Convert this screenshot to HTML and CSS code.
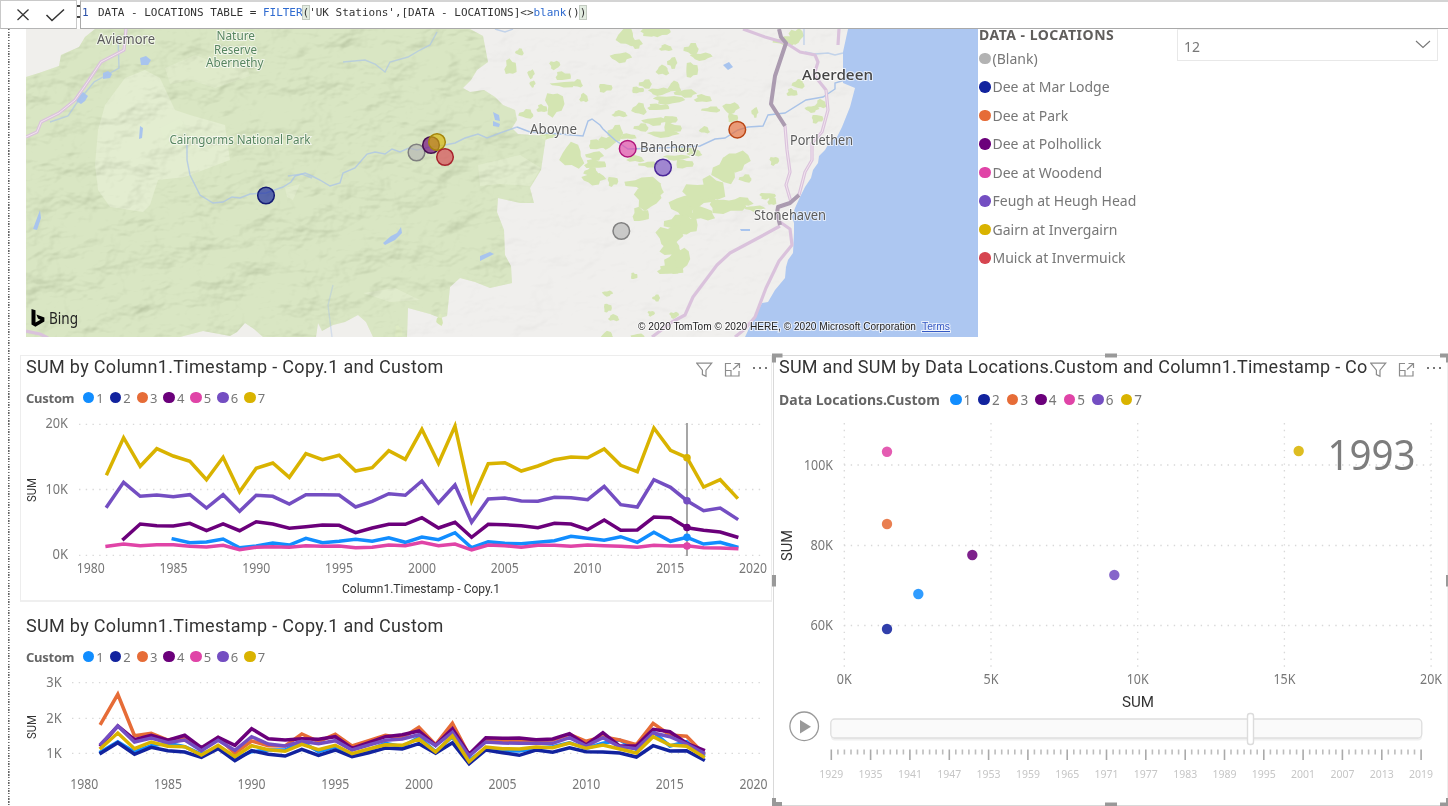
FILE: index.html
```html
<!DOCTYPE html>
<html lang="en">
<head>
<meta charset="utf-8">
<title>River stations report</title>
<link rel="stylesheet" href="styles.css">
</head>
<body>
<header class="formula">
  <div class="formula-actions">
    <svg width="75" height="27" viewBox="1 1 75 27"><path d="M17.500 9.500l11 10.500M28.500 9.500l-11 10.500" fill="none" stroke="#333" stroke-width="1.300"/><path d="M46.500 15l5.500 5.500L64 9.500" fill="none" stroke="#333" stroke-width="1.500"/></svg>
  </div>
  <div class="formula-gap"></div>
  <div class="formula-editor"><span class="line-no">1</span><code>DATA - LOCATIONS TABLE = <b>FILTER</b><i>(</i>'UK Stations',[DATA - LOCATIONS]&lt;&gt;<b>blank</b>()<i>)</i></code></div>
</header>
<main class="report">
  <section class="top">
    <svg class="map" id="map" width="952" height="308" viewBox="26 29 952 308">
      <defs>
        <filter id="relief" x="0" y="0" width="100%" height="100%">
          <feTurbulence type="fractalNoise" baseFrequency="0.022 0.035" numOctaves="4" seed="8" result="n"/>
          <feDiffuseLighting in="n" surfaceScale="9" diffuseConstant="1.150" lighting-color="#fff"><feDistantLight azimuth="225" elevation="60"/></feDiffuseLighting>
        </filter>
        <clipPath id="land"><path d="M26 29H848L843 52V83L855 88L850 107L842 127L825 150L813 170L800 197L792 217L794 233L793 253L786 267V278L768 302L753 320L745 337H26Z"/></clipPath>
        <clipPath id="parkclip"><use href="#park"/></clipPath>
      </defs>
      <rect x="26" y="29" width="952" height="308" fill="#f0efec"/>
      <g clip-path="url(#land)"><rect x="380" y="29" width="480" height="308" filter="url(#relief)" class="relief faint"/></g>
      <path id="park" fill="#cfdfb2" d="M95 29H470L483 36L488 62L477 70L471 80L463 88L470 92L484 90L495 97L503 105L515 110L517 120L512 128L518 134L546 136L544 150L541 170L530 188L534 203L520 203L498 198L497 212L504 230L505 255L511 266L512 283L490 288L475 282L460 278L450 287L447 316L440 318L430 314L408 308L407 337H373L366 322L358 315L345 322L333 325L322 331L318 323L316 337H263L254 329L245 323L237 332L230 336L203 331L180 337H26V77L39 73L59 66L61 55L79 47L85 37Z"/>
      <g fill="#dbe8c3">
        <path d="M125 78L145 70L160 78L175 110L190 115L225 125L230 160L185 177L158 180L150 205L143 212L110 207L98 190L95 165L98 130L105 105Z"/>
        <path d="M165 68L195 55L225 66L245 60L250 76L215 88L190 80L170 84Z" opacity=".6"/>
        <path d="M478 165L520 155L541 168L530 186L500 184L480 186Z" opacity=".7"/>
        <path d="M285 188L300 184L293 200L287 197ZM363 293L395 288L420 300L390 302Z" opacity=".7"/>
        <path d="M160 128L180 118L197 140L186 150L166 146Z" opacity=".8"/>
      </g>
      <g id="patches" fill="#d4e5b2"></g>
      <g clip-path="url(#parkclip)"><rect x="26" y="29" width="540" height="308" filter="url(#relief)" class="relief"/></g>
      <path fill="#adc7f1" d="M848 29L843 52V83L855 88L850 107L842 127L837 137L829 143L825 150L819 156L818 163L813 170L811 178L805 187L800 197L795 208L792 217L794 223L794 233L793 253L788 260L786 267L785 278L775 290L768 302L762 303L753 320L745 337H978V29Z"/>
      <g fill="#a8c4ee">
        <path d="M140 58l6-2 5 4-3 5-7 0zM103 73l5-2 4 3-2 4-7 1zM78 96l5-4 5 4-3 5-4 3-5-3zM140 126l3 2-1 10-3 1zM40 210l1 8-4 12-4-1zM383 243l8-7 6-3 4-6 1 6-7 7-10 5zM480 256l10-4 4 2-8 4-6 3zM493 112l6 3 1 6-5-1zM493 121l7 3-1 3-6-1zM723 65l6-3 4 5-5 3zM740 229h10v2h-9z" transform="translate(0 0)"/>
      </g>
      <g fill="none" stroke="#a9c3e8" stroke-width="1.400">
        <path opacity=".75" d="M187 145L187 160L190 175L200 195L213 203L223 202L232 197L240 198L250 194L266 193L283 187L291 182L295 176L305 173L312 176L320 180L330 186L340 183L343 173L355 168L367 154L375 152L385 154L392 149L400 152L409 148L417 150L430 147L445 145L455 143L465 138L478 134L487 138L500 133L517 127"/>
        <path d="M517 127L530 132L560 134L583 136L588 121L592 119L600 125L603 129L615 140L628 149L660 148L700 146L715 139L725 138L738 130L748 127L763 126L768 115L785 113L806 100L823 97L835 89L835 83L845 80"/>
        <path d="M805 52L815 54L828 53L835 55L843 53M804 29V45M288 176l14-2 10 4M343 62L365 60L375 64L385 72L390 62L408 57L420 50L430 45L437 32M495 29l10 3 8-3M118 35l1 33-25 14-18 22-8 12-18 6" opacity=".65"/>
        <path d="M333 285l-5 20 4 32" opacity=".4"/>
      </g>
      <g class="road">
        <path d="M126 29L124 50L101 62L89 80L75 100L59 113L41 122L37 132L26 137M26 331l14 3 8 4"/>
        <path d="M743 29L765 37L786 43L800 52L815 55L818 62L814 75L826 90L828 110L822 132L812 143L812 160L805 172L799 195"/>
        <path d="M839 29L838 45M785 126L787 150L790 172L786 185L791 202M780 222L790 229L792 245L779 261L766 288L755 317L745 329L735 337"/>
        <path d="M780 226L760 237L730 253L717 265L693 297L685 315L672 322L652 337"/>
      </g>
      <path class="road-core" d="M126 29L124 50L101 62L89 80L75 100L59 113L41 122L37 132L26 137M785 126L787 150L790 172L786 185L791 202M826 90L828 110L822 132L812 143L812 160L805 172L799 195"/>
      <path class="road-dark" d="M779 29L781 37L786 43L775 76L771 104L785 126M799 195L790 203L778 207L777 213L780 225"/>
      <g class="places">
        <text x="97" y="43.500" textLength="58" lengthAdjust="spacingAndGlyphs">Aviemore</text>
        <text x="530" y="133.500" textLength="47" lengthAdjust="spacingAndGlyphs">Aboyne</text>
        <text x="640" y="151.500" textLength="58" lengthAdjust="spacingAndGlyphs">Banchory</text>
        <text x="790" y="144.500" textLength="63" lengthAdjust="spacingAndGlyphs">Portlethen</text>
        <text x="754" y="219.500" textLength="72" lengthAdjust="spacingAndGlyphs">Stonehaven</text>
        <text x="802" y="79.500" textLength="71" lengthAdjust="spacingAndGlyphs" class="city">Aberdeen</text>
      </g>
      <g class="nature">
        <text x="216.500" y="40" textLength="38.500" lengthAdjust="spacingAndGlyphs">Nature</text>
        <text x="214" y="53.700" textLength="43" lengthAdjust="spacingAndGlyphs">Reserve</text>
        <text x="206" y="67.400" textLength="57.500" lengthAdjust="spacingAndGlyphs">Abernethy</text>
        <text x="169.500" y="144" textLength="141" lengthAdjust="spacingAndGlyphs">Cairngorms National Park</text>
      </g>
      <g fill-opacity=".65" stroke-width="1.500">
        <circle cx="266" cy="195.500" r="8.300" fill="#12239e" stroke="#151c74"/>
        <circle cx="416.500" cy="152.500" r="8.300" fill="#b3b3b3" stroke="#808080"/>
        <circle cx="431" cy="145" r="8.300" fill="#6b007b" stroke="#45104f"/>
        <circle cx="437" cy="142" r="8.300" fill="#d9b300" stroke="#a5860c"/>
        <circle cx="445" cy="157" r="8.300" fill="#d64550" stroke="#a8232d"/>
        <circle cx="627.700" cy="148.700" r="8.300" fill="#e044a7" stroke="#b0157a"/>
        <circle cx="663" cy="167.500" r="8.300" fill="#744ec2" stroke="#4a2698"/>
        <circle cx="737.300" cy="129.700" r="8.300" fill="#e66c37" stroke="#b94514"/>
        <circle cx="621.300" cy="231" r="8.300" fill="#b3b3b3" stroke="#808080"/>
      </g>
      <path fill="#000" d="M31.500 309l4 1.300v12.200l5-2.800-2.500-1.200-1.600-3.900 8 2.800v4.100l-9 5.300-3.900-2.200z"/>
      <text x="49" y="324" class="bing" textLength="29" lengthAdjust="spacingAndGlyphs">Bing</text>
      <text x="638" y="330" class="credit" textLength="278" lengthAdjust="spacingAndGlyphs">© 2020 TomTom © 2020 HERE, © 2020 Microsoft Corporation</text>
      <text x="922" y="330" class="credit terms" textLength="28" lengthAdjust="spacingAndGlyphs">Terms</text>
    </svg>
    <div class="stations">
      <h2>DATA - LOCATIONS</h2>
      <ul>
        <li class="c0">(Blank)</li><li class="c2">Dee at Mar Lodge</li><li class="c3">Dee at Park</li><li class="c4">Dee at Polhollick</li><li class="c5">Dee at Woodend</li><li class="c6">Feugh at Heugh Head</li><li class="c7">Gairn at Invergairn</li><li class="c8">Muick at Invermuick</li>
      </ul>
    </div>
    <div class="slicer"><span>12</span><svg width="16" height="9" viewBox="0 0 16 9"><path d="M1 1l7 6.500L15 1" fill="none" stroke="#777" stroke-width="1.100"/></svg></div>
  </section>
  <section class="bottom">
    <div class="lines">
      <article class="panel framed">
        <div class="panel-head"><h3>SUM by Column1.Timestamp - Copy.1 and Custom</h3><div class="tools"></div></div>
        <div class="legend"><strong>Custom</strong></div>
        <svg id="chart1" class="chart" width="750" height="190" viewBox="21 410 750 190"></svg>
      </article>
      <article class="panel">
        <div class="panel-head"><h3>SUM by Column1.Timestamp - Copy.1 and Custom</h3></div>
        <div class="legend"><strong>Custom</strong></div>
        <svg id="chart2" class="chart" width="750" height="137" viewBox="21 669 750 137"></svg>
      </article>
    </div>
    <article class="panel selected">
      <div class="panel-head"><h3>SUM and SUM by Data Locations.Custom and Column1.Timestamp - Co</h3><div class="tools"></div></div>
      <div class="legend wide"><strong>Data Locations.Custom</strong></div>
      <svg id="scatter" class="chart" width="673" height="390" viewBox="774 414 673 390"></svg>
      <svg class="handles" width="676" height="454" viewBox="772 352 676 454"><path fill="#999" d="M772 353.500h10.500v4H776v5h-4zM1105 353.500h12v4h-12zM1440 353.500h8v9h-2v-5h-6zM772 575h4v11.500h-4zM1446 575h2v11.500h-2zM772 798h4v4h6v4h-10zM1105 802.500h12v3.500h-12zM1446 798h2v8h-8v-3.500h6z"/></svg>
    </article>
  </section>
</main>
<script src="charts.js"></script>
</body>
</html>
```
FILE: styles.css
```css
* { box-sizing: border-box; margin: 0; padding: 0; }
body { width: 1448px; height: 806px; overflow: hidden; background: #fff; font-family: "Noto Sans", "Open Sans", sans-serif; color: #666; }
svg { display: block; }
.formula { display: flex; height: 29px; background: #fff; }
.formula-actions { width: 77px; height: 29px; border: 1px solid #c9c9c9; border-bottom-color: #b5b5b5; }
.formula-gap { width: 3px; height: 18px; border-top: 5px solid #fff; background: linear-gradient(#444 2px, transparent 2px 11px, #444 11px); }
.formula-editor { flex: 1; display: flex; border: 1px solid #a9a9a9; border-top: 2px solid #d4d4d4; border-right: 0; padding: 0 0 0 1px; font: 11px/21px "DejaVu Sans Mono", monospace; color: #333; }
.line-no { width: 16px; color: #2b50a8; }
.formula-editor code { font: inherit; letter-spacing: -0.025px; white-space: pre; }
.formula-editor b { font-weight: 400; color: #2f6bd0; }
.formula-editor i { font-style: normal; background: #e2ece0; box-shadow: 0 0 0 1px #c3cbc1; }
.report { height: 777px; padding-left: 20px; background: repeating-linear-gradient(#666 0 1.300px, #fff 1.300px 2.700px) 7.700px 0 / 1.600px 100% no-repeat; }
.top { display: flex; height: 326px; padding-left: 6px; }
.map { flex: none; }
.relief { mix-blend-mode: multiply; opacity: .22; }
.relief.faint { opacity: .06; }
.road { fill: none; stroke: #dac2dc; stroke-width: 3.200; stroke-linejoin: round; }
.road-core { fill: none; stroke: #f2e4ee; stroke-width: 1; }
.road-dark { fill: none; stroke: #ab9bb0; stroke-width: 4; stroke-linejoin: round; }
.places, .nature { font-size: 14px; paint-order: stroke; stroke: rgba(255,255,255,.65); stroke-width: 2px; }
.places { fill: #5b5b5b; }
.places .city { font-size: 15px; fill: #444; font-weight: 500; }
.nature { font-size: 12.500px; fill: #578560; }
.bing { font-size: 15.500px; fill: #222; }
.credit { font: 10.300px "Liberation Sans", Arial, sans-serif; fill: #222; paint-order: stroke; stroke: rgba(255,255,255,.7); stroke-width: 2px; }
.terms { fill: #3559c4; text-decoration: underline; }
.stations { width: 199px; padding-left: 1px; }
.stations h2 { height: 15px; font-size: 14px; line-height: 12px; color: #605e5c; letter-spacing: 0.5px; white-space: nowrap; }
.stations ul { list-style: none; }
.stations li { display: flex; align-items: center; height: 28.500px; font-size: 14px; color: #777; }
.stations li::before, .key::before { content: ""; width: 11.500px; height: 11.500px; border-radius: 50%; background: var(--c); margin-right: 2px; flex: none; }
.c0 { --c: #b3b3b3; } .c1 { --c: #118dff; } .c2 { --c: #12239e; } .c3 { --c: #e66c37; } .c4 { --c: #6b007b; }
.c5 { --c: #e044a7; } .c6 { --c: #744ec2; } .c7 { --c: #d9b300; } .c8 { --c: #d64550; }
.slicer { width: 261px; height: 32px; border: 1px solid #e8e8e8; border-top-color: #f2f2f2; display: flex; justify-content: space-between; align-items: center; padding: 3px 6px 0; font-size: 14px; color: #777; }
.slicer svg { margin-top: -4px; }
.bottom { display: flex; height: 451px; }
.lines { width: 753px; flex: none; }
.panel { position: relative; border: 1px solid transparent; }
.lines .panel { width: 752px; height: 247px; }
.framed { border-color: #ededed; border-bottom: 2px solid #efefef; }
.lines .panel + .panel { margin-top: 12px; height: 192px; }
.panel-head { display: flex; justify-content: space-between; height: 28px; padding-left: 5px; }
.panel-head h3 { font: 400 18px/21px Roboto, sans-serif; color: #333; letter-spacing: 0.320px; white-space: nowrap; }
.tools { flex: none; width: 80px; padding: 6px 3px 0 5px; }
.legend { display: flex; align-items: center; height: 26px; padding-left: 5px; padding-top: 1px; font-size: 13px; color: #777; }
.legend strong { color: #666; font-size: 13px; width: 56.800px; letter-spacing: -0.250px; }
.key { display: flex; align-items: center; width: 26.900px; }
.selected { flex: 1; min-width: 0; border: 1px solid #d9d9d9; border-right-color: #eee; height: 451px; }
.selected h3 { width: 588px; letter-spacing: 0.240px; }
.selected .tools { padding-left: 3px; }
.selected .legend { height: 30px; font-size: 13.500px; }
.legend.wide strong { width: 171px; font-size: 14px; letter-spacing: 0; }
.wide .key { width: 28.450px; }
.handles { position: absolute; left: -2px; top: -4px; }
.chart text { font-size: 13.500px; fill: #777; }
.chart .axis { font-family: Roboto, sans-serif; font-size: 12px; fill: #333; }
.grid { stroke: #d8d8d8; stroke-width: 1.300; stroke-dasharray: 1.400 5.330; }
.chart polyline { fill: none; stroke-width: 3.500; stroke-linejoin: miter; stroke-linecap: square; }
.chart .year { font-size: 42px; fill: #7d7d7d; }
.chart .tick { font-size: 11px; fill: #c6c6c6; }
```
FILE: charts.js
```js
const COLORS = { 1: '#118dff', 2: '#12239e', 3: '#e66c37', 4: '#6b007b', 5: '#e044a7', 6: '#744ec2', 7: '#d9b300' };

const label = (x, y, s, w, extra = '') =>
  `<text x="${x - w / 2}" y="${y}" textLength="${w}" lengthAdjust="spacingAndGlyphs" ${extra}>${s}</text>`;
const grid = (x1, y1, x2, y2) => `<line class="grid" x1="${x1}" y1="${y1}" x2="${x2}" y2="${y2}"/>`;

document.querySelectorAll('.legend').forEach(el => {
  for (let i = 1; i <= 7; i++) el.insertAdjacentHTML('beforeend', `<span class="key c${i}">${i}</span>`);
});
document.querySelectorAll('.tools').forEach(el => {
  el.innerHTML = `<svg width="72" height="16" viewBox="0 0 72 16" fill="none" stroke="#8c8c8c" stroke-width="1.200">
    <path d="M.7 1.200h15l-5.700 7v6l-3.600-1.700V8.200z"/>
    <path d="M35 1.500h-5.500v12.500h13.500V9M29.500 8.500h5.500v5.500M37 7.500l6-5.500M38.500 1.500h5v4.500"/>
    <path d="M57 6h2M63 6h2M69 6h2" stroke-width="2" stroke="#777"/></svg>`;
});

/* Series values are third-pixel offsets below the panel origin, one per year. */
function series(first, values, color, x0, step, top) {
  const pts = values.map((v, i) => `${(x0 + (first - 1980 + i) * step).toFixed(1)},${(top + v / 3).toFixed(1)}`);
  return `<polyline points="${pts.join(' ')}" stroke="${COLORS[color]}"/>`;
}

const a = {
  7: [1981, [386,278,364,311,333,349,404,337,440,370,354,397,326,344,331,378,368,317,343,253,355,243,468,356,353,378,363,344,336,338,312,361,380,249,316,338,426,404,457]],
  6: [1981, [484,412,454,450,455,449,489,449,499,451,454,477,449,449,450,486,469,446,451,408,474,420,532,462,459,468,469,457,458,464,424,479,486,404,427,467,497,489,521]],
  4: [1982, [582,537,542,543,535,557,537,557,530,537,550,545,540,541,563,549,538,538,518,549,532,577,538,539,542,548,535,537,554,525,556,555,516,518,548,556,561,576]],
  1: [1985, [582,593,591,582,608,603,594,600,580,593,589,583,589,578,592,576,584,563,608,590,595,596,592,587,574,580,586,575,592,562,589,577,597,592,606]],
  5: [1981, [604,597,602,599,599,604,606,601,614,607,605,607,602,604,603,608,607,600,602,592,602,597,615,600,602,607,601,601,604,600,602,604,607,601,603,602,608,609,611]]
};
let s = '';
[[424.3, '20K'], [489.5, '10K'], [555.3, '0K']].forEach(([y, t]) => {
  const w = t.length === 3 ? 22.5 : 15.5;
  s += grid(79, y, 763, y) + label(68 - w / 2, y + 4, t, w);
});
for (let i = 0; i <= 8; i++) s += label(90.7 + i * 82.8, 573, 1980 + i * 5, 28);
s += '<line x1="687" x2="687" y1="423" y2="556" stroke="#777" stroke-width="1.300"/>';
[1, 5, 4, 6, 7].forEach(k => { s += series(a[k][0], a[k][1], k, 90.5, 16.57, 345); });
[[457.7, 7], [500.7, 6], [527.5, 4], [537.3, 1], [546, 5]].forEach(([y, k]) => {
  s += `<circle cx="687" cy="${y}" r="3.800" fill="${COLORS[k]}"/>`;
});
s += label(421, 593, 'Column1.Timestamp - Copy.1', 158, 'class="axis"');
s += '<g transform="rotate(-90 36 490)">' + label(36, 490, 'SUM', 24, 'class="axis"') + '</g>';
document.getElementById('chart1').innerHTML = s;

const b = {
  1: [455,425,456,437,430,440,462,443,475,455,450,450,425,455,440,463,450,430,440,412,455,410,480,447,452,453,445,440,428,445,430,420,448,395,438,425,465],
  2: [459,428,463,442,452,456,472,446,482,452,463,468,448,466,450,470,458,444,447,431,460,428,491,450,458,466,450,457,443,455,456,459,471,437,453,452,479],
  3: [370,283,407,400,420,412,448,413,460,423,437,438,402,425,403,438,422,406,414,382,434,370,465,420,422,422,422,420,403,424,410,420,434,370,405,409,460],
  4: [435,378,419,406,421,406,443,412,436,386,416,420,416,418,410,445,428,410,404,393,436,386,463,413,415,414,419,417,401,435,398,438,438,388,395,430,450],
  6: [432,378,426,414,428,420,452,421,451,410,432,438,424,431,422,450,435,421,417,404,437,397,468,426,429,430,430,430,413,438,413,440,446,399,410,432,458],
  7: [444,399,446,426,439,440,465,436,470,437,449,454,433,449,436,461,447,434,436,417,456,408,485,441,446,447,441,443,429,445,435,447,459,410,435,439,470]
};
s = '';
[[682.7, '3K'], [718.3, '2K'], [753.3, '1K']].forEach(([y, t]) => { s += grid(72, y, 763, y) + label(54, y + 4.5, t, 15.5); });
for (let i = 0; i <= 8; i++) s += label(84.3 + i * 83.65, 789, 1980 + i * 5, 28);
[1, 2, 3, 4, 6, 7].forEach(k => { s += series(1981, b[k], k, 84.3, 16.73, 600); });
s += '<g transform="rotate(-90 36 727)">' + label(36, 727, 'SUM', 24, 'class="axis"') + '</g>';
document.getElementById('chart2').innerHTML = s;

s = '';
[[465, '100K'], [545.5, '80K'], [625.5, '60K']].forEach(([y, t]) => {
  const w = t.length === 4 ? 29 : 22.5;
  s += grid(844, y, 1432, y) + label(833 - w / 2, y + 4.5, t, w);
});
['0K', '5K', '10K', '15K', '20K'].forEach((t, i) => {
  const x = 844.3 + i * 146.7;
  s += grid(x, 423, x, 667) + label(x, 684, t, t.length === 2 ? 15 : 22);
});
[[887, 451.7, 5], [887, 524, 3], [972.3, 555, 4], [918.3, 594, 1], [887, 629, 2], [1114.3, 575, 6], [1298.7, 451, 7]].forEach(([x, y, k]) => {
  s += `<circle cx="${x}" cy="${y}" r="5.200" fill="${COLORS[k]}" fill-opacity=".87"/>`;
});
s += label(1371.5, 470, '1993', 88, 'class="year"');
s += label(1138, 707, 'SUM', 32, 'class="axis" style="font-size:15px"');
s += '<g transform="rotate(-90 792 545.500)">' + label(792, 545.5, 'SUM', 31, 'class="axis" style="font-size:15px"') + '</g>';
s += '<circle cx="804.2" cy="726.3" r="14.300" fill="#fff" stroke="#999" stroke-width="1.300"/><path d="M800 720v13.500l11-6.750z" fill="#999"/>';
s += '<rect x="831" y="720.5" width="591" height="20" rx="4" fill="#f0f0f0"/><rect x="830.8" y="719" width="591" height="19" rx="4" fill="#fafafa" stroke="#dedede" stroke-width="1.300"/>';
s += '<rect x="1247.500" y="713.500" width="6" height="31" rx="2.500" fill="#fff" stroke="#dcdcdc" stroke-width="1.400"/>';
for (let i = 0; i <= 90; i++) {
  const x = (831.3 + i * 6.553).toFixed(1), major = i % 6 === 0;
  s += `<line x1="${x}" x2="${x}" y1="749.500" y2="${major ? 760 : 754.5}" stroke="${major ? '#aaa' : '#bdbdbd'}" stroke-width="1.600"/>`;
  if (major) s += label(+x, 778, 1929 + i, 24, 'class="tick"');
}
document.getElementById('scatter').innerHTML = s;

/* Woodland east of the park: x, y, width, height */
const woods = [
  [618,29,18,16],[630,40,12,8],[650,27,18,9],[505,60,11,14],[516,49,8,6],[612,53,18,9],[641,29,26,7],[660,45,12,6],[685,44,14,10],[692,53,18,7],
  [686,63,11,14],[657,66,12,9],[668,58,9,10],[550,61,9,8],[556,72,14,8],[573,80,10,7],[553,82,26,5],[546,93,16,22],[537,105,10,7],[520,110,14,8],
  [528,70,6,8],[599,84,12,8],[580,94,8,8],[640,80,12,8],[650,88,18,7],[632,87,11,6],[669,82,12,10],[676,90,20,7],[655,96,26,8],[648,104,20,6],
  [633,104,14,10],[644,118,22,7],[664,116,12,8],[695,95,16,7],[703,107,18,5],[724,103,14,10],[728,114,9,8],[613,111,14,6],[609,126,14,14],[600,136,14,12],
  [589,140,18,9],[562,145,22,22],[587,152,16,8],[540,133,14,6],[585,160,20,8],[585,168,14,8],[584,174,20,10],[608,177,9,9],[620,134,16,5],[635,124,14,7],
  [650,131,26,6],[664,124,16,9],[628,156,16,6],[640,162,18,5],[665,155,22,5],[674,147,18,5],[700,127,10,6],[752,108,6,9],[770,157,8,8],[787,89,10,7],
  [793,80,12,8],[806,106,12,6],[812,115,10,8],[816,100,10,8],[775,37,22,8],[790,29,12,14],[676,160,16,8],[688,150,14,6],
  [628,178,32,12],[636,188,22,20],[633,208,15,13],[650,184,14,10],[672,196,26,20],[684,184,30,22],[700,178,24,22],[714,160,22,22],[726,152,22,18],
  [710,200,32,13],[690,208,24,12],[666,216,22,15],[658,226,22,20],[680,216,16,18],[662,242,20,14],[666,254,16,18],[674,248,14,22],[658,266,24,8],
  [730,198,24,7],[746,206,18,5],[760,193,14,6],[768,196,8,9],[740,175,12,7],[603,291,9,5],[604,304,7,8],[609,315,10,6],[653,295,7,6],[670,312,8,6],
  [631,273,6,6],[602,332,12,8],[632,334,12,5],[648,311,6,5],[395,326,7,11],[437,315,6,10],[530,81,5,6]
];
document.getElementById('patches').innerHTML = woods.map(([x, y, w, h], n) => {
  const pts = [];
  for (let i = 0; i < 11; i++) {
    const t = i / 11 * Math.PI * 2, r = 0.34 + 0.32 * Math.abs(Math.sin(n * 2.3 + i * 4.1));
    pts.push(`${(x + w / 2 + Math.cos(t) * r * w).toFixed(1)},${(y + h / 2 + Math.sin(t) * r * h).toFixed(1)}`);
  }
  return `<polygon points="${pts.join(' ')}"/>`;
}).join('');
```
